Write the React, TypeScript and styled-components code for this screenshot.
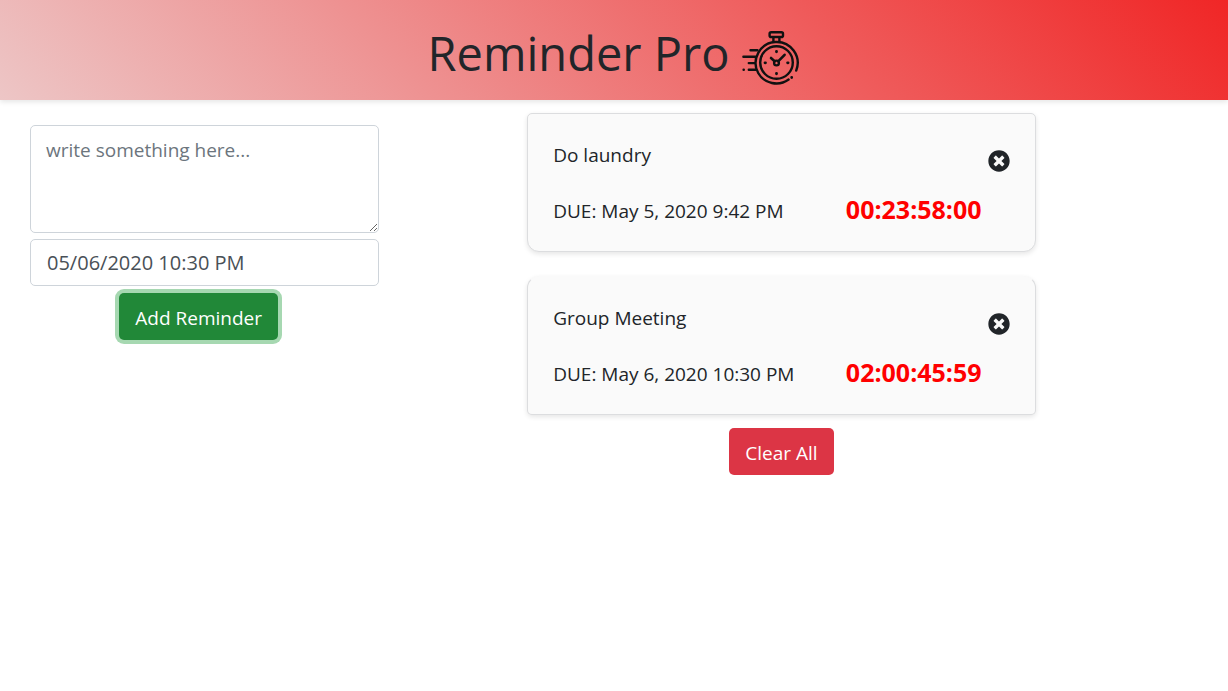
import React, { useState } from "react";
import styled, { createGlobalStyle } from "styled-components";
import { FaTimesCircle } from "react-icons/fa";

const GlobalStyle = createGlobalStyle`
  *, *::before, *::after { box-sizing: border-box; }
  body {
    margin: 0;
    background: #fff;
    color: #212529;
    font-family: "Open Sans", "Noto Sans", sans-serif;
    font-size: 19px;
    line-height: 30px;
  }
`;

const Header = styled.header`
  display: flex;
  justify-content: center;
  align-items: flex-end;
  gap: 11px;
  min-height: 100px;
  padding-bottom: 12px;
  background: linear-gradient(45deg, #edc6c6, #f02626);
  box-shadow: 0 2px 5px rgba(0, 0, 0, 0.1);
`;

const Title = styled.h1`
  margin: 0;
  padding-bottom: 5px;
  font-size: 47px;
  font-weight: 400;
  line-height: 60px;
`;

const Main = styled.main`
  display: flex;
  align-items: flex-start;
`;

const ReminderForm = styled.form`
  display: flex;
  flex-direction: column;
  flex: 0 0 33.3333%;
  gap: 6px;
  padding: 25px 30px;
`;

const fieldStyle = `
  display: block;
  width: 100%;
  border: 1px solid #ced4da;
  border-radius: 5px;
  background: #fff;
  color: #495057;
  font: inherit;
  outline: none;
`;

const NoteField = styled.textarea`
  ${fieldStyle}
  height: 108px;
  padding: 9px 15px;
  resize: vertical;
  &::placeholder { color: #6c757d; opacity: 1; }
`;

const DateField = styled.input`
  ${fieldStyle}
  height: 47px;
  padding: 8px 16px;
  font-size: 20px;
`;

const Button = styled.button<{ $tone: "success" | "danger" }>`
  align-self: center;
  height: 47px;
  margin: 1px 0;
  padding: 2px 16px 0;
  border: 0;
  border-radius: 5px;
  background: ${(p) => (p.$tone === "success" ? "#218838" : "#dc3545")};
  box-shadow: ${(p) => (p.$tone === "success" ? "0 0 0 4px #a6d8b1" : "none")};
  color: #fff;
  font: inherit;
  cursor: pointer;
`;

const AddButton = styled(Button)`
  margin-right: 12px;
`;

const Reminders = styled.section`
  display: flex;
  flex-direction: column;
  gap: 12px;
  width: 41.4%;
  margin: 13px 0 0 9.6%;
`;

const List = styled.ul`
  display: flex;
  flex-direction: column;
  gap: 24px;
  margin: 0;
  padding: 0;
  list-style: none;
`;

const Item = styled.li`
  display: flex;
  flex-direction: column;
  gap: 26px;
  padding: 26px 25px 25px;
  border: 1px solid #dcdddf;
  border-radius: 12px;
  background: #fafafa;
  box-shadow: 0 2px 5px rgba(0, 0, 0, 0.1);
  &:first-child { border-top-left-radius: 5px; border-top-right-radius: 5px; }
  &:last-child { border-bottom-left-radius: 5px; border-bottom-right-radius: 5px; }
  & + & { border-top-color: transparent; }
`;

const Row = styled.div`
  display: flex;
  justify-content: space-between;
  align-items: center;
  height: 30px;
`;

const Countdown = styled.strong`
  margin-right: 28px;
  padding-bottom: 4px;
  color: #f00;
  font-size: 25px;
  font-weight: 700;
`;

const DeleteButton = styled.button`
  display: flex;
  padding: 12px 0 0;
  border: 0;
  background: none;
  color: #212529;
  cursor: pointer;
`;

function Stopwatch() {
  return (
    <svg width="60" height="60" viewBox="0 0 60 60" fill="none" stroke="#111" strokeWidth="2.4" strokeLinecap="round" aria-hidden="true">
      <rect x="29.6" y="4.2" width="13.4" height="4.8" rx="1.6" />
      <path d="M33.4 9.2v4.6M39.4 9.2v4.6" />
      <path d="M18.2 45A21 21 0 1 1 56.2 42.6M48.6 51.6A21 21 0 0 1 18.2 45" />
      <circle cx="36.5" cy="34.5" r="16.3" />
      <circle cx="36.5" cy="35" r="2.4" />
      <path d="M38.4 33.2L44.6 26.8M34.6 33.2L31 30" strokeWidth="2.6" />
      <path d="M36.5 23.3v.5M36.5 45.3v.5M25 34.8h.5M47.6 34.8h.5M51.7 49.5v.1" strokeWidth="2.8" />
      <path d="M10.5 22.2h7M3.4 28.7h12M8.8 35.1h6M8.8 41.7h7M3.6 41.7h.2" />
    </svg>
  );
}

const initialReminders = [
  { id: 1, text: "Do laundry", due: "May 5, 2020 9:42 PM", left: "00:23:58:00" },
  { id: 2, text: "Group Meeting", due: "May 6, 2020 10:30 PM", left: "02:00:45:59" },
];

export default function App() {
  const [reminders, setReminders] = useState(initialReminders);
  const [date, setDate] = useState("05/06/2020 10:30 PM");

  return (
    <>
      <GlobalStyle />
      <Header>
        <Title>Reminder Pro</Title>
        <Stopwatch />
      </Header>
      <Main>
        <ReminderForm onSubmit={(e) => e.preventDefault()}>
          <NoteField aria-label="Reminder" placeholder="write something here..." />
          <DateField aria-label="Due date" value={date} onChange={(e) => setDate(e.target.value)} />
          <AddButton $tone="success" type="submit">Add Reminder</AddButton>
        </ReminderForm>
        <Reminders>
          <List>
            {reminders.map((r) => (
              <Item key={r.id}>
                <Row>
                  <span>{r.text}</span>
                  <DeleteButton
                    type="button"
                    aria-label={`Delete ${r.text}`}
                    onClick={() => setReminders(reminders.filter((x) => x.id !== r.id))}
                  >
                    <FaTimesCircle size={22} />
                  </DeleteButton>
                </Row>
                <Row>
                  <span>DUE: {r.due}</span>
                  <Countdown>{r.left}</Countdown>
                </Row>
              </Item>
            ))}
          </List>
          <Button $tone="danger" type="button" onClick={() => setReminders([])}>Clear All</Button>
        </Reminders>
      </Main>
    </>
  );
}
